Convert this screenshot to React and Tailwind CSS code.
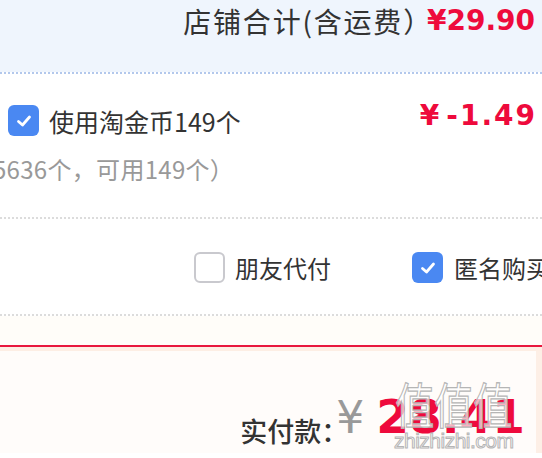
import React from "react";

const font = { fontFamily: '"Noto Sans CJK SC", "Noto Sans", sans-serif' };
const num = { fontFamily: '"DejaVu Sans", "Noto Sans CJK SC", sans-serif' };

function Check({ checked }) {
  if (checked) {
    return (
      <div className="w-[31px] h-[31px] rounded-[6px] bg-[#4a88f2] flex items-center justify-center shrink-0">
        <svg width="18" height="18" viewBox="0 0 18 18">
          <path d="M3.5 9.5 L7.5 13 L14.5 5" fill="none" stroke="white" strokeWidth="2.8" strokeLinecap="round" strokeLinejoin="round" />
        </svg>
      </div>
    );
  }
  return <div className="w-[31px] h-[31px] rounded-[6px] border-2 border-[#c9c9ce] bg-white shrink-0" />;
}

export default function App() {
  return (
    <div className="w-[542px] h-[458px] overflow-hidden bg-white relative" style={font}>
      <div className="h-[72px] bg-[#eff5fd] flex justify-end items-start pr-[7px] pt-[1px] whitespace-nowrap">
        <span className="text-[28px] leading-[40px] text-[#333] tracking-[1.8px]">店铺合计(含运费）</span>
        <span className="text-[28px] leading-[40px] font-bold text-[#ee0a3c] ml-[-6px]" style={num}>¥29.90</span>
      </div>
      <div className="border-b-2 border-dotted border-[#b3c8ec]" />
      <div className="h-[145px] bg-white flex flex-col border-b-2 border-dotted border-[#dcdcdc]">
        <div className="flex items-start justify-between pl-[8px] pr-[7px] pt-[26px] whitespace-nowrap">
          <div className="flex items-center mt-[5px]">
            <Check checked />
            <span className="ml-[10px] text-[25px] leading-[30px] text-[#333]">使用淘金币149个</span>
          </div>
          <span className="text-[28px] leading-[34px] font-bold text-[#ee0a3c] mt-[-1px]" style={num}>¥<span className="ml-[7px] tracking-[2px] mr-[-2px]">-1.49</span></span>
        </div>
        <div className="ml-[-7px] mt-[18px] text-[24px] leading-[30px] text-[#999] whitespace-nowrap tracking-[0.3px]">5636个，可用149个）</div>
      </div>
      <div className="h-[97px] bg-white flex items-center border-b-2 border-dotted border-[#dcdcdc] pt-[2px] whitespace-nowrap">
        <div className="flex items-center ml-[194px] shrink-0">
          <Check />
          <span className="ml-[10px] text-[24px] leading-[30px] text-[#333]">朋友代付</span>
        </div>
        <div className="flex items-center ml-[81px] shrink-0">
          <Check checked />
          <span className="ml-[11px] text-[24px] leading-[30px] text-[#333]">匿名购买</span>
        </div>
      </div>
      <div className="h-[29px] bg-[#fffdf9]" />
      <div className="h-[2px] bg-[#e8173e]" />
      <div className="h-[4px] bg-[#fdeee4]" />
      <div className="h-[102px] bg-[#fffcfa] flex items-end justify-end pr-[11px] pb-[14px] border-r-[6px] border-[#fdefe6] whitespace-nowrap">
        <span className="text-[27px] leading-[40px] font-medium text-[#333] mb-[-12px]">实付款：</span>
        <span className="text-[44px] leading-[50px] text-[#999] ml-[-12px] mr-[12px] mb-[-4px]" style={num}>¥</span>
        <span className="text-[47px] leading-[52px] font-bold text-[#ee0a3c] mb-[-4px]" style={num}>28.41</span>
      </div>
      <div className="absolute left-[394px] top-[376px] flex flex-col items-center pointer-events-none">
        <span className="text-[39px] leading-[54px] text-white/70 [-webkit-text-stroke:1px_#b5b5b5] scale-y-125">值值值</span>
        <span className="text-[21px] leading-[24px] text-white/70 [-webkit-text-stroke:1px_#b5b5b5] mt-[-1px] tracking-[-0.5px]" style={{ fontFamily: '"Liberation Sans", sans-serif' }}>zhizhizhi.com</span>
      </div>
    </div>
  );
}
